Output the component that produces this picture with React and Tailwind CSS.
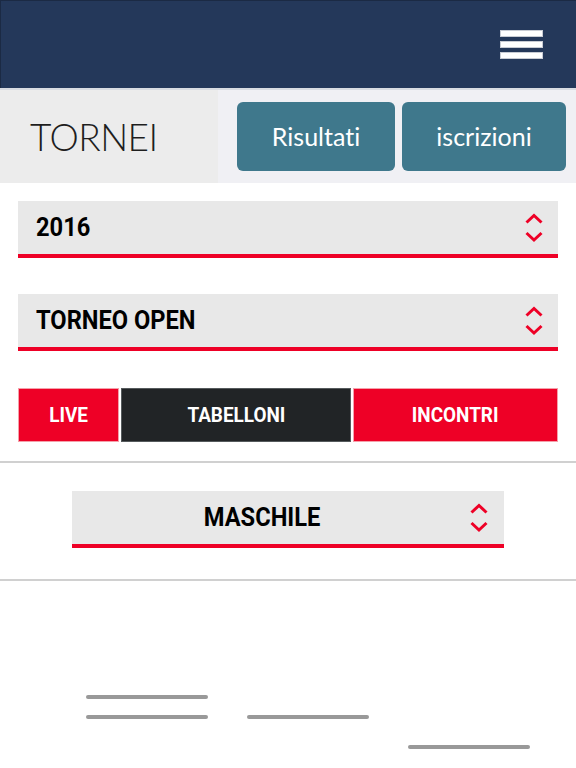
import { useState } from "react";

const roboto = { fontFamily: "Roboto, 'Liberation Sans', sans-serif" };

function Chevrons() {
  return (
    <svg width="18" height="30" viewBox="0 0 18 30" fill="none">
      <polyline points="1.5,9.5 9,2.5 16.5,9.5" stroke="#ee0026" strokeWidth="3" />
      <polyline points="1.5,20 9,27 16.5,20" stroke="#ee0026" strokeWidth="3" />
    </svg>
  );
}

function Select({ label, centered }) {
  return (
    <div
      className={
        "flex h-[57px] items-center border-b-[4px] border-[#ee0026] bg-[#e8e8e8] " +
        (centered ? "pl-[18px] pr-[16px]" : "pl-[18px] pr-[15px]")
      }
    >
      <div className={"flex-1 " + (centered ? "pr-[36px] text-center" : "")}>
        <span
          className={
            "inline-block scale-x-[0.91] text-[26px] font-bold leading-none text-black " +
            (centered ? "origin-center" : "origin-left")
          }
          style={roboto}
        >
          {label}
        </span>
      </div>
      <Chevrons />
    </div>
  );
}

export default function App() {
  const [tab, setTab] = useState("TABELLONI");
  const tabs = ["LIVE", "TABELLONI", "INCONTRI"];

  return (
    <div className="min-h-[768px] w-full bg-white">
      {/* barra in alto */}
      <header className="flex h-[88px] items-center justify-end border-l border-t border-[#1b2a44] bg-[#24385a] pr-[33px]">
        <button className="flex w-[43px] flex-col gap-[4px]">
          <span className="block h-[7px] w-full border border-[#c8ccd4] bg-white" />
          <span className="block h-[7px] w-full border border-[#c8ccd4] bg-white" />
          <span className="block h-[7px] w-full border border-[#c8ccd4] bg-white" />
        </button>
      </header>

      <div className="flex h-[95px] border-t-2 border-[#d9dce2] bg-[#f0f0f4]">
        <div className="flex w-[218px] items-center bg-[#ececec] pl-[30px]">
          <h1
            className="text-[37px] font-light leading-none tracking-[-0.5px] text-[#1e1e1e]"
            style={{ fontFamily: "Lato, 'Open Sans', sans-serif" }}
          >
            TORNEI
          </h1>
        </div>
        <div className="flex flex-1 items-center gap-[7px] pl-[19px] pr-[10px]">
          {["Risultati", "iscrizioni"].map((b, i) => (
            <button
              key={b}
              className={
                "h-[69px] rounded-[6px] bg-[#3f788c] text-[25px] leading-none text-white [font-variant-ligatures:none] " +
                (i === 0 ? "w-[158px]" : "flex-1")
              }
              style={{ fontFamily: "Lato, 'Open Sans', sans-serif" }}
            >
              {b}
            </button>
          ))}
        </div>
      </div>

      <div className="flex flex-col gap-[36px] px-[18px] pt-[18px]">
        <Select label="2016" />
        <Select label="TORNEO OPEN" />
      </div>

      <div className="mx-[18px] mt-[37px] grid h-[54px] grid-cols-[101px_230px_1fr] gap-[2px]">
        {tabs.map((t) => (
          <button
            key={t}
            onClick={() => setTab(t)}
            className={
              "flex items-center justify-center border " +
              (tab === t
                ? "border-[#555a5c] bg-[#212426]"
                : "border-[#f4a0aa] bg-[#ee0026]")
            }
          >
            <span
              className="inline-block scale-x-[0.9] text-[21px] font-bold leading-none text-white"
              style={roboto}
            >
              {t}
            </span>
          </button>
        ))}
      </div>

      <div className="mt-[19px] border-t-2 border-[#d0d0d0]" />

      <div className="mx-[72px] mt-[28px]">
        <Select label="MASCHILE" centered />
      </div>

      <div className="mt-[31px] border-t-2 border-[#d0d0d0]" />

      {/* tabellone */}
      <div className="flex gap-[39px] pl-[86px] pt-[114px]">
        <div className="flex w-[122px] flex-col gap-[16px]">
          <div className="h-[4px] rounded-full bg-[#999]" />
          <div className="h-[4px] rounded-full bg-[#999]" />
        </div>
        <div className="mt-[20px] w-[122px]">
          <div className="h-[4px] rounded-full bg-[#999]" />
        </div>
        <div className="mt-[50px] w-[122px]">
          <div className="h-[4px] rounded-full bg-[#999]" />
        </div>
      </div>
    </div>
  );
}
